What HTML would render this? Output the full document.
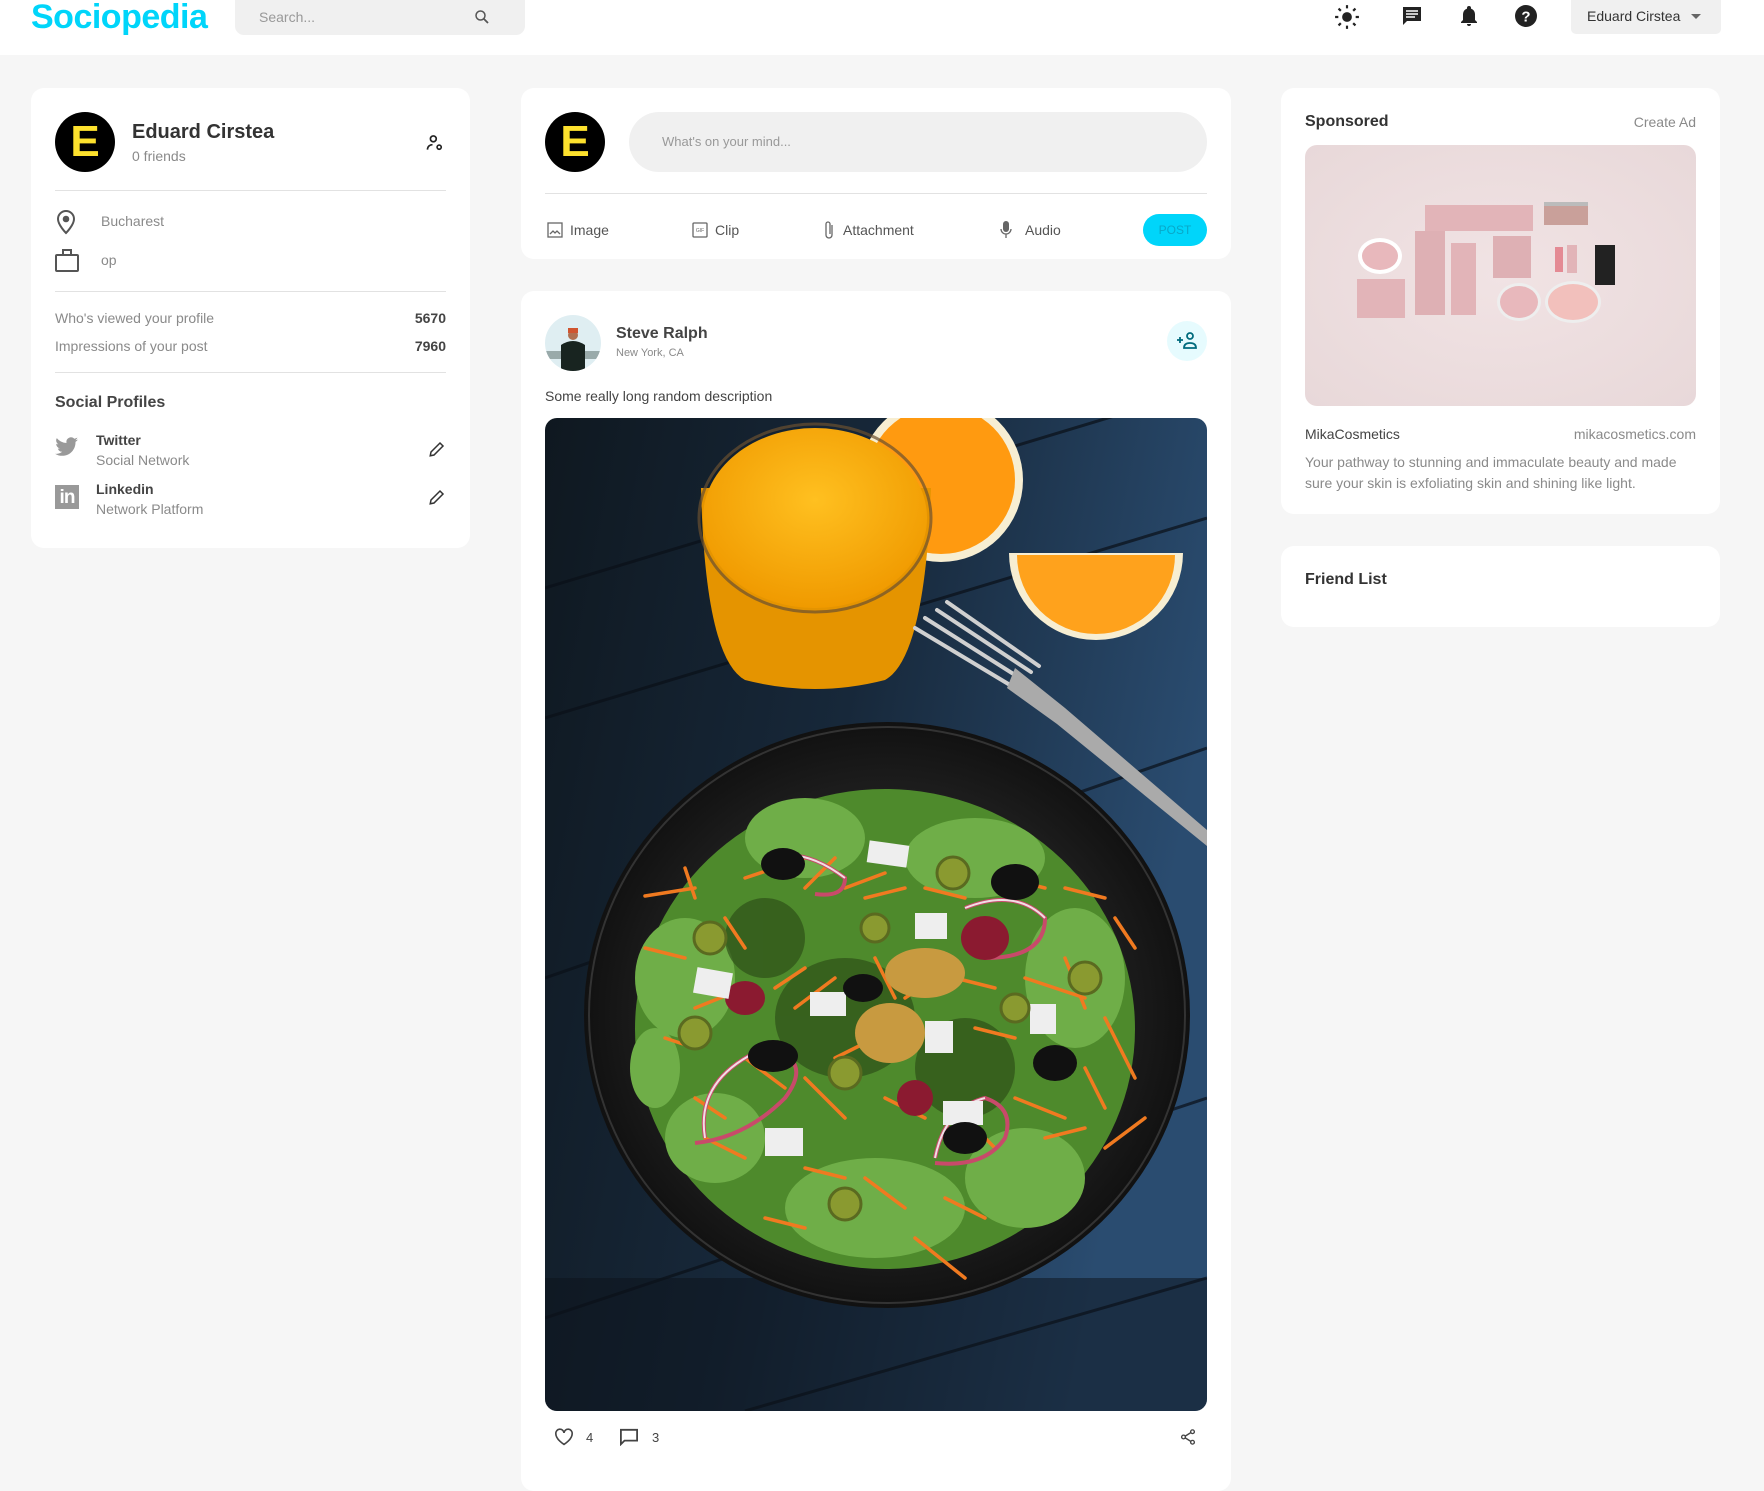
<!DOCTYPE html>
<html><head><meta charset="utf-8"><style>
*{box-sizing:border-box;margin:0;padding:0}
body{width:1764px;height:1450px;overflow:hidden;background:#f6f6f6;font-family:"Liberation Sans",sans-serif;color:#333;position:relative}
.abs{position:absolute}
header{position:absolute;left:0;top:0;width:1764px;height:55px;background:#fff}
.card{position:absolute;background:#fff;border-radius:13px}
.g{color:#8a8a8a}
.hr{position:absolute;height:1px;background:#e2e2e2}
</style></head><body>
<header>
<div class="abs" style="left:31px;top:-2px;font-size:34px;font-weight:bold;color:#00d5fa;letter-spacing:-0.5px">Sociopedia</div>
<div class="abs" style="left:235px;top:0;width:290px;height:35px;background:#f0f0f0;border-radius:0 0 9px 9px">
<span class="abs" style="left:24px;top:9px;font-size:14px;color:#999">Search...</span>
<svg class="abs" style="left:238px;top:8px" width="18" height="18" viewBox="0 0 24 24"><circle cx="10" cy="10" r="6" fill="none" stroke="#555" stroke-width="2"/><path d="M14.5 14.5L20 20" stroke="#555" stroke-width="2.4"/></svg>
</div>
<svg class="abs" style="left:1334px;top:4px" width="26" height="26" viewBox="0 0 24 24"><circle cx="12" cy="12" r="4.5" fill="#222"/><g stroke="#222" stroke-width="2"><path d="M12 1v3M12 20v3M1 12h3M20 12h3M4.2 4.2l2.1 2.1M17.7 17.7l2.1 2.1M4.2 19.8l2.1-2.1M17.7 6.3l2.1-2.1"/></g></svg>
<svg class="abs" style="left:1400px;top:4px" width="24" height="24" viewBox="0 0 24 24"><path d="M3 3h18v14H7l-4 4z" fill="#222"/><path d="M6 7h12M6 10h12M6 13h9" stroke="#fff" stroke-width="1.5"/></svg>
<svg class="abs" style="left:1457px;top:4px" width="24" height="24" viewBox="0 0 24 24"><path d="M12 2a2 2 0 0 1 2 2v.6A6 6 0 0 1 18 10v6l2 2v1H4v-1l2-2v-6a6 6 0 0 1 4-5.4V4a2 2 0 0 1 2-2zM10 20h4a2 2 0 0 1-4 0z" fill="#222"/></svg>
<svg class="abs" style="left:1514px;top:4px" width="24" height="24" viewBox="0 0 24 24"><circle cx="12" cy="12" r="11" fill="#222"/><text x="12" y="17.5" text-anchor="middle" font-size="15" font-weight="bold" fill="#fff" font-family="Liberation Sans">?</text></svg>
<div class="abs" style="left:1571px;top:0;width:150px;height:34px;background:#f0f0f0;border-radius:0 0 5px 5px">
<span class="abs" style="left:16px;top:8px;font-size:14px;color:#333">Eduard Cirstea</span>
<span class="abs" style="left:120px;top:14px;border:5px solid transparent;border-top-color:#666;border-bottom:0"></span>
</div>
</header>

<!-- left card -->
<div class="card" style="left:31px;top:88px;width:439px;height:460px">
<div class="abs" style="left:24px;top:24px;width:60px;height:60px;border-radius:50%;background:#000;color:#fde12d;font-weight:bold;font-size:44px;text-align:center;line-height:60px">E</div>
<div class="abs" style="left:101px;top:33px;font-size:20px;font-weight:bold;color:#333">Eduard Cirstea</div>
<div class="abs g" style="left:101px;top:60px;font-size:14px">0 friends</div>
<svg class="abs" style="left:394px;top:45px" width="20" height="20" viewBox="0 0 24 24" fill="none" stroke="#222" stroke-width="2"><circle cx="10" cy="7" r="3.5"/><path d="M3 20c0-4 3-6 6-6"/><circle cx="17" cy="17" r="2.5"/></svg>
<div class="hr" style="left:24px;top:102px;width:391px"></div>
<svg class="abs" style="left:24px;top:121px" width="22" height="26" viewBox="0 0 22 26" fill="none" stroke="#555" stroke-width="2"><path d="M11 24s8-8 8-14a8 8 0 0 0-16 0c0 6 8 14 8 14z"/><circle cx="11" cy="10" r="2.3" fill="#555"/></svg>
<div class="abs g" style="left:70px;top:125px;font-size:14px">Bucharest</div>
<svg class="abs" style="left:24px;top:160px" width="24" height="24" viewBox="0 0 24 24" fill="none" stroke="#555" stroke-width="2"><rect x="1" y="7" width="22" height="16" rx="1"/><path d="M8 7V2h8v5"/></svg>
<div class="abs g" style="left:70px;top:164px;font-size:14px">op</div>
<div class="hr" style="left:24px;top:203px;width:391px"></div>
<div class="abs g" style="left:24px;top:222px;font-size:14px">Who's viewed your profile</div>
<div class="abs" style="right:24px;top:222px;font-size:14px;font-weight:bold;color:#444">5670</div>
<div class="abs g" style="left:24px;top:250px;font-size:14px">Impressions of your post</div>
<div class="abs" style="right:24px;top:250px;font-size:14px;font-weight:bold;color:#444">7960</div>
<div class="hr" style="left:24px;top:284px;width:391px"></div>
<div class="abs" style="left:24px;top:306px;font-size:16px;font-weight:bold;color:#444">Social Profiles</div>
<svg class="abs" style="left:24px;top:348px" width="24" height="22" viewBox="0 0 24 20"><path d="M23 2.5a9 9 0 0 1-2.7.8A4.7 4.7 0 0 0 22.4.6a9 9 0 0 1-3 1.1A4.7 4.7 0 0 0 11.5 6 13.3 13.3 0 0 1 1.8 1.1a4.7 4.7 0 0 0 1.5 6.3 4.6 4.6 0 0 1-2.1-.6 4.7 4.7 0 0 0 3.7 4.6 4.7 4.7 0 0 1-2.1.1 4.7 4.7 0 0 0 4.4 3.3A9.4 9.4 0 0 1 0 16.7 13.3 13.3 0 0 0 7.2 18.8c8.6 0 13.3-7.1 13.3-13.3v-.6A9.5 9.5 0 0 0 23 2.5z" fill="#999"/></svg>
<div class="abs" style="left:65px;top:344px;font-size:14px;font-weight:bold;color:#444">Twitter</div>
<div class="abs g" style="left:65px;top:364px;font-size:14px">Social Network</div>
<svg class="abs" style="left:397px;top:352px" width="18" height="18" viewBox="0 0 24 24" fill="none" stroke="#333" stroke-width="2"><path d="M3 21l1-5L16 4l4 4L8 20z"/></svg>
<div class="abs" style="left:24px;top:397px;width:24px;height:24px;background:#999;color:#fff;font-weight:bold;font-size:19px;line-height:26px;text-align:center;letter-spacing:-1px">in</div>
<div class="abs" style="left:65px;top:393px;font-size:14px;font-weight:bold;color:#444">Linkedin</div>
<div class="abs g" style="left:65px;top:413px;font-size:14px">Network Platform</div>
<svg class="abs" style="left:397px;top:400px" width="18" height="18" viewBox="0 0 24 24" fill="none" stroke="#333" stroke-width="2"><path d="M3 21l1-5L16 4l4 4L8 20z"/></svg>
</div>

<!-- composer -->
<div class="card" style="left:521px;top:88px;width:710px;height:171px">
<div class="abs" style="left:24px;top:24px;width:60px;height:60px;border-radius:50%;background:#000;color:#fde12d;font-weight:bold;font-size:44px;text-align:center;line-height:60px">E</div>
<div class="abs" style="left:108px;top:24px;width:578px;height:60px;border-radius:30px;background:#f0f0f0"><span class="abs" style="left:33px;top:22px;font-size:13px;color:#999">What's on your mind...</span></div>
<div class="hr" style="left:24px;top:105px;width:662px"></div>
<svg class="abs" style="left:26px;top:134px" width="16" height="16" viewBox="0 0 16 16" fill="none" stroke="#666" stroke-width="1.3"><rect x="1" y="1" width="14" height="14"/><path d="M3 12l3-3 2 2 2-2 3 3" /></svg>
<div class="abs" style="left:49px;top:134px;font-size:14px;color:#555">Image</div>
<svg class="abs" style="left:171px;top:134px" width="16" height="16" viewBox="0 0 16 16" fill="none" stroke="#666" stroke-width="1.3"><rect x="1" y="1" width="14" height="14" rx="1"/><text x="8" y="10" font-size="5" text-anchor="middle" fill="#666" stroke="none">GIF</text></svg>
<div class="abs" style="left:194px;top:134px;font-size:14px;color:#555">Clip</div>
<svg class="abs" style="left:302px;top:132px" width="12" height="20" viewBox="0 0 12 20" fill="none" stroke="#666" stroke-width="1.3"><path d="M9 5v10a3 3 0 0 1-6 0V4a2 2 0 0 1 4 0v10"/></svg>
<div class="abs" style="left:322px;top:134px;font-size:14px;color:#555">Attachment</div>
<svg class="abs" style="left:479px;top:132px" width="12" height="20" viewBox="0 0 12 20"><rect x="3" y="1" width="6" height="11" rx="3" fill="#666"/><path d="M1 9a5 5 0 0 0 10 0M6 14v4" stroke="#666" stroke-width="1.3" fill="none"/></svg>
<div class="abs" style="left:504px;top:134px;font-size:14px;color:#555">Audio</div>
<div class="abs" style="left:622px;top:126px;width:64px;height:32px;border-radius:16px;background:#00d5fa;color:#08a8c8;font-size:12px;text-align:center;line-height:32px">POST</div>
</div>

<!-- post -->
<div class="card" style="left:521px;top:291px;width:710px;height:1200px">
<svg class="abs" style="left:24px;top:24px" width="56" height="56" viewBox="0 0 56 56"><defs><clipPath id="c"><circle cx="28" cy="28" r="28"/></clipPath></defs><g clip-path="url(#c)"><rect width="56" height="56" fill="#dfeef2"/><rect y="36" width="56" height="8" fill="#9aa"/><path d="M16 56V30q12-8 24 0v26z" fill="#182420"/><circle cx="28" cy="20" r="5" fill="#b07050"/><rect x="23" y="13" width="10" height="5" fill="#d05530"/></g></svg>
<div class="abs" style="left:95px;top:34px;font-size:16px;font-weight:bold;color:#444">Steve Ralph</div>
<div class="abs g" style="left:95px;top:56px;font-size:11px">New York, CA</div>
<div class="abs" style="left:646px;top:30px;width:40px;height:40px;border-radius:50%;background:#e6fbfe"></div>
<svg class="abs" style="left:655px;top:40px" width="22" height="20" viewBox="0 0 22 20" fill="none" stroke="#006b7d" stroke-width="1.8"><circle cx="14" cy="5" r="3"/><path d="M8 17c0-4 3-5 6-5s6 1 6 5z"/><path d="M1 9h6M4 6v6"/></svg>
<div class="abs" style="left:24px;top:97px;font-size:14px;color:#444">Some really long random description</div>
<svg class="abs" style="left:24px;top:127px;border-radius:12px" width="662" height="993" viewBox="0 0 662 993">
<defs>
<linearGradient id="bg" x1="0" y1="0" x2="1" y2="0.3"><stop offset="0" stop-color="#0f1820"/><stop offset="0.5" stop-color="#17283a"/><stop offset="1" stop-color="#2a4c70"/></linearGradient>
<radialGradient id="pl" cx="0.5" cy="0.5" r="0.5"><stop offset="0.75" stop-color="#1e1e1e"/><stop offset="1" stop-color="#111"/></radialGradient>
<radialGradient id="oj" cx="0.5" cy="0.4" r="0.6"><stop offset="0" stop-color="#ffc020"/><stop offset="1" stop-color="#f09a00"/></radialGradient>
</defs>
<rect width="662" height="993" fill="url(#bg)"/>
<g stroke="#0a1018" stroke-width="3" opacity="0.7"><path d="M0 300L662 100M0 560L662 330M0 900L662 680M200 993L662 860M0 170L662 -30"/></g>
<rect x="0" y="860" width="662" height="133" fill="#0c121a" opacity="0.5"/>
<!-- orange 1 -->
<circle cx="396" cy="62" r="82" fill="#f7eed2"/><circle cx="396" cy="62" r="74" fill="#ff9a10"/>
<!-- orange 2 -->
<path d="M464 135h174a87 87 0 0 1-174 0z" fill="#f7eed2"/><path d="M472 137h158a79 79 0 0 1-158 0z" fill="#ffa21c"/>
<!-- glass -->
<path d="M156 70Q160 240 200 262Q270 280 340 262Q380 240 386 70z" fill="#e59400"/>
<ellipse cx="270" cy="100" rx="112" ry="90" fill="url(#oj)"/>
<ellipse cx="270" cy="100" rx="116" ry="94" fill="none" stroke="#6a5030" stroke-width="3" opacity="0.7"/>
<!-- fork -->
<g stroke="#d0d0d0" stroke-width="4" stroke-linecap="round"><path d="M370 210L470 270M380 200L478 262M392 192L486 254M402 184L494 248"/></g>
<path d="M470 250L520 290L662 412L662 428L512 306L462 270z" fill="#aaa"/>
<!-- plate -->
<ellipse cx="342" cy="597" rx="303" ry="293" fill="url(#pl)"/>
<ellipse cx="342" cy="597" rx="298" ry="288" fill="none" stroke="#333" stroke-width="2"/>
<!-- salad -->
<g fill="#4e8a2c">
<ellipse cx="340" cy="611" rx="250" ry="240"/>
</g>
<g fill="#6fae48"><ellipse cx="260" cy="420" rx="60" ry="40"/><ellipse cx="430" cy="440" rx="70" ry="40"/><ellipse cx="530" cy="560" rx="50" ry="70"/><ellipse cx="140" cy="560" rx="50" ry="60"/><ellipse cx="330" cy="790" rx="90" ry="50"/><ellipse cx="480" cy="760" rx="60" ry="50"/><ellipse cx="170" cy="720" rx="50" ry="45"/><ellipse cx="110" cy="650" rx="25" ry="40"/></g>
<g fill="#2e5018" opacity="0.7"><ellipse cx="300" cy="600" rx="70" ry="60"/><ellipse cx="420" cy="650" rx="50" ry="50"/><ellipse cx="220" cy="520" rx="40" ry="40"/></g>
<g stroke="#f07a20" stroke-width="3.5" stroke-linecap="round" fill="none">
<path d="M100 478L150 470M140 450L150 480M200 460L260 440M260 470L290 440M300 470L340 455M320 480L360 470M380 470L420 480M460 460L500 470M520 470L560 480M570 500L590 530M100 530L140 540M150 590L200 570M230 570L260 550M250 590L290 560M360 580L390 560M410 560L450 570M480 560L540 580M560 600L590 660M120 620L150 630M200 640L240 670M260 660L300 700M340 680L380 700M420 700L450 730M470 680L520 700M540 650L560 690M160 720L200 740M260 750L300 760M320 760L360 790M400 780L440 800M500 720L540 710M560 730L600 700M370 820L420 860M220 800L260 810M330 540L350 580M180 500L200 530M430 610L470 620M520 540L540 590M290 640L330 620M150 680L180 700"/>
</g>
<g fill="none" stroke="#c84a6a" stroke-width="4">
<path d="M230 440Q260 430 300 460Q300 480 270 476"/><path d="M420 490Q470 470 500 500Q500 540 440 540"/>
<path d="M160 720Q150 660 220 630Q270 640 240 680Q200 720 150 725"/><path d="M390 740Q400 690 440 680Q470 690 460 720Q440 750 390 745"/>
</g>
<g fill="none" stroke="#f0dfe5" stroke-width="2">
<path d="M230 440Q260 430 300 460"/><path d="M420 490Q470 470 500 500"/><path d="M160 720Q150 660 220 630"/><path d="M390 740Q400 690 440 680"/>
</g>
<g fill="#8b1a30"><ellipse cx="440" cy="520" rx="24" ry="22"/><ellipse cx="200" cy="580" rx="20" ry="17"/><ellipse cx="370" cy="680" rx="18" ry="18"/></g>
<g fill="#c89a40"><ellipse cx="380" cy="555" rx="40" ry="25"/><ellipse cx="345" cy="615" rx="35" ry="30"/></g>
<g fill="#eee"><rect x="323" y="425" width="40" height="22" transform="rotate(8 343 436)"/><rect x="370" y="495" width="32" height="26"/><rect x="150" y="552" width="36" height="26" transform="rotate(10 168 565)"/><rect x="485" y="586" width="26" height="30"/><rect x="220" y="710" width="38" height="28"/><rect x="380" y="603" width="28" height="32"/><rect x="265" y="574" width="36" height="24"/><rect x="398" y="683" width="40" height="24"/></g>
<g fill="#111"><ellipse cx="238" cy="446" rx="22" ry="16"/><ellipse cx="470" cy="464" rx="24" ry="18"/><ellipse cx="318" cy="570" rx="20" ry="14"/><ellipse cx="510" cy="645" rx="22" ry="18"/><ellipse cx="228" cy="638" rx="25" ry="16"/><ellipse cx="420" cy="720" rx="22" ry="16"/></g>
<g fill="#8a9a30" stroke="#5a6a20" stroke-width="3"><circle cx="408" cy="455" r="16"/><circle cx="165" cy="520" r="16"/><circle cx="540" cy="560" r="16"/><circle cx="470" cy="590" r="14"/><circle cx="150" cy="615" r="16"/><circle cx="300" cy="655" r="16"/><circle cx="300" cy="786" r="16"/><circle cx="330" cy="510" r="14"/></g>
</svg>
<svg class="abs" style="left:33px;top:1137px" width="20" height="18" viewBox="0 0 24 22" fill="none" stroke="#444" stroke-width="2"><path d="M12 20S2 14 2 7a5 5 0 0 1 10-1 5 5 0 0 1 10 1c0 7-10 13-10 13z"/></svg>
<div class="abs" style="left:65px;top:1139px;font-size:13px;color:#444">4</div>
<svg class="abs" style="left:98px;top:1137px" width="20" height="18" viewBox="0 0 22 20" fill="none" stroke="#444" stroke-width="2"><path d="M2 2h18v12H6l-4 4z"/></svg>
<div class="abs" style="left:131px;top:1139px;font-size:13px;color:#444">3</div>
<svg class="abs" style="left:658px;top:1137px" width="18" height="18" viewBox="0 0 24 24" fill="none" stroke="#444" stroke-width="1.8"><circle cx="18" cy="5" r="2.5"/><circle cx="6" cy="12" r="2.5"/><circle cx="18" cy="19" r="2.5"/><path d="M8 11l8-5M8 13l8 5"/></svg>
</div>

<!-- sponsored -->
<div class="card" style="left:1281px;top:88px;width:439px;height:426px">
<div class="abs" style="left:24px;top:25px;font-size:16px;font-weight:bold;color:#333">Sponsored</div>
<div class="abs g" style="right:24px;top:26px;font-size:14px">Create Ad</div>
<div class="abs" style="left:24px;top:57px;width:391px;height:261px;border-radius:12px;background:radial-gradient(ellipse at center,#f1e3e4,#e8d8d9)">
<div class="abs" style="left:120px;top:60px;width:108px;height:26px;background:#e2b4b8"></div>
<div class="abs" style="left:239px;top:57px;width:44px;height:23px;background:#c9a09a;border-top:4px solid #bbb"></div>
<div class="abs" style="left:53px;top:93px;width:44px;height:36px;border-radius:50%;background:#e8b8bc;border:4px solid #fff"></div>
<div class="abs" style="left:52px;top:134px;width:48px;height:39px;background:#e2b4b8"></div>
<div class="abs" style="left:110px;top:86px;width:30px;height:84px;background:#deb0b4"></div>
<div class="abs" style="left:146px;top:98px;width:25px;height:72px;background:#e2b4b8"></div>
<div class="abs" style="left:188px;top:91px;width:38px;height:42px;background:#deb0b4"></div>
<div class="abs" style="left:250px;top:102px;width:8px;height:25px;background:#e48a94"></div>
<div class="abs" style="left:262px;top:100px;width:10px;height:28px;background:#e2b4b8"></div>
<div class="abs" style="left:290px;top:100px;width:20px;height:40px;background:#222"></div>
<div class="abs" style="left:192px;top:138px;width:44px;height:38px;border-radius:50%;background:#e8b8bc;border:3px solid #eee"></div>
<div class="abs" style="left:240px;top:136px;width:56px;height:42px;border-radius:50%;background:#f2c0bc;border:3px solid #eee"></div>
</div>
<div class="abs" style="left:24px;top:338px;font-size:14px;color:#444">MikaCosmetics</div>
<div class="abs g" style="right:24px;top:338px;font-size:14px">mikacosmetics.com</div>
<div class="abs g" style="left:24px;top:364px;width:395px;font-size:14px;line-height:21px">Your pathway to stunning and immaculate beauty and made sure your skin is exfoliating skin and shining like light.</div>
</div>

<div class="card" style="left:1281px;top:546px;width:439px;height:81px">
<div class="abs" style="left:24px;top:25px;font-size:16px;font-weight:bold;color:#333">Friend List</div>
</div>
</body></html>
